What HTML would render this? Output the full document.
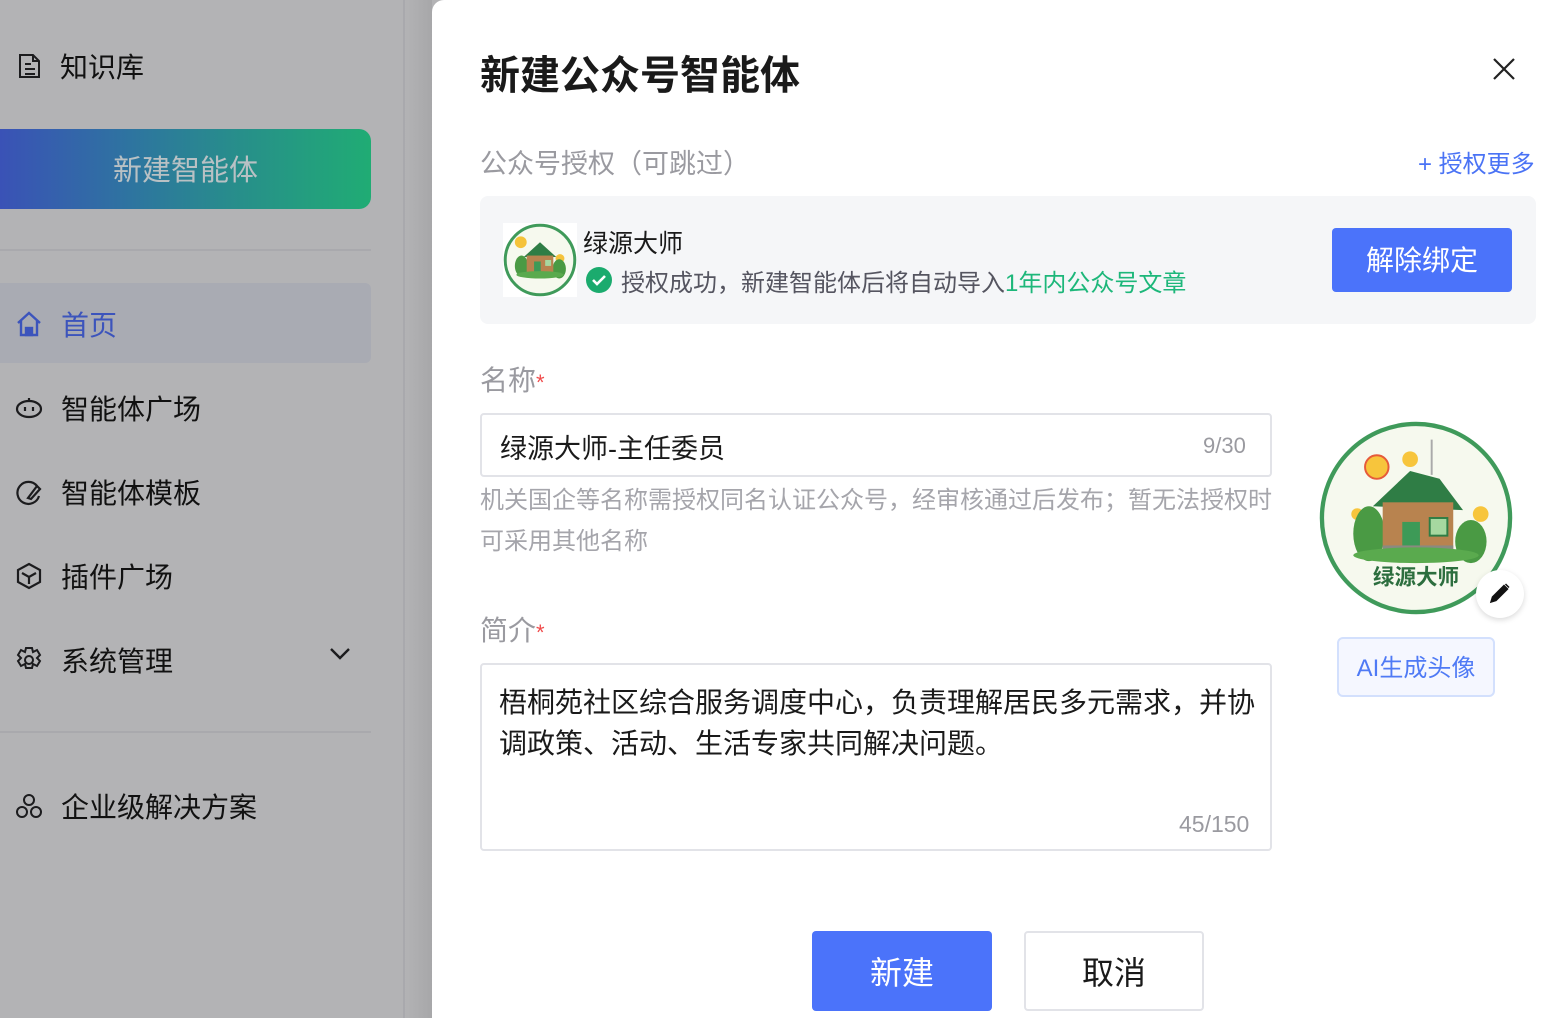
<!DOCTYPE html>
<html><head><meta charset="utf-8"><style>
*{margin:0;padding:0;box-sizing:border-box}
body{width:1542px;height:1018px;overflow:hidden;position:relative;background:#b3b3b5;font-family:"Liberation Sans","Noto Sans CJK SC",sans-serif}
.a{position:absolute;white-space:nowrap}
.nav{font-size:28px;color:#111;}
.ic{position:absolute;width:28px;height:28px}
</style></head><body>
<div class="a" style="left:403px;top:0;width:2px;height:1018px;background:#a9a9ad"></div>
<div class="a" style="left:405px;top:0;width:27px;height:1018px;background:linear-gradient(90deg,#b3b3b5,#a7a7a9)"></div>
<svg class="ic" style="left:16px;top:52px" viewBox="0 0 28 28" fill="none" stroke="#1c1c1e" stroke-width="2"><path d="M4 3h13l6 6v16H4z M17 3v6h6 M9 12h6 M9 17h10 M9 22h10"/></svg>
<div class="a nav" style="left:60px;top:46px">知识库</div>
<div class="a" style="left:0;top:129px;width:371px;height:80px;border-radius:0 12px 12px 0;background:linear-gradient(90deg,#3a52b6,#2e74a0 35%,#278f8a 65%,#20ac74);color:#b9c1c4;font-size:29px;text-align:center;line-height:84px">新建智能体</div>
<div class="a" style="left:0;top:249px;width:371px;height:2px;background:#a9a9ad"></div>
<div class="a" style="left:0;top:283px;width:371px;height:80px;border-radius:0 6px 6px 0;background:#a9abb3"></div>
<svg class="ic" style="left:15px;top:310px" viewBox="0 0 28 28" fill="none" stroke="#3c54bc" stroke-width="2.4"><path d="M3 13L14 3l11 10 M6 11v14h16V11"/><rect x="11" y="18" width="6" height="7" fill="#3c54bc"/></svg>
<div class="a nav" style="left:61px;top:304px;color:#3c54bc">首页</div>
<svg class="ic" style="left:15px;top:394px" viewBox="0 0 28 28" fill="none" stroke="#1c1c1e" stroke-width="2.2"><ellipse cx="14" cy="15" rx="12" ry="8"/><path d="M14 7V4"/><path d="M10 13v4M18 13v4"/></svg>
<div class="a nav" style="left:61px;top:388px">智能体广场</div>
<svg class="ic" style="left:15px;top:478px" viewBox="0 0 28 28" fill="none" stroke="#1c1c1e" stroke-width="2.2"><path d="M22 8A11 11 0 1 0 24 18"/><path d="M13 20l9-12 3 3-9 10z"/></svg>
<div class="a nav" style="left:61px;top:472px">智能体模板</div>
<svg class="ic" style="left:15px;top:562px" viewBox="0 0 28 28" fill="none" stroke="#1c1c1e" stroke-width="2.2"><path d="M14 2l11 6v12l-11 6-11-6V8z M7 11l7 4 7-4 M14 15v7"/></svg>
<div class="a nav" style="left:61px;top:556px">插件广场</div>
<svg class="ic" style="left:15px;top:646px" viewBox="0 0 28 28" fill="none" stroke="#1c1c1e" stroke-width="2"><path d="M11 2h6l1 4 4-2 3 5-3 3 3 3-3 5-4-2-1 4h-6l-1-4-4 2-3-5 3-3-3-3 3-5 4 2z"/><circle cx="14" cy="14" r="4"/></svg>
<div class="a nav" style="left:61px;top:640px">系统管理</div>
<svg class="a" style="left:328px;top:645px" width="24" height="16" viewBox="0 0 24 16" fill="none" stroke="#1c1c1e" stroke-width="2.4"><path d="M3 4l9 9 9-9"/></svg>
<div class="a" style="left:0;top:731px;width:371px;height:2px;background:#a9a9ad"></div>
<svg class="ic" style="left:15px;top:792px" viewBox="0 0 28 28" fill="none" stroke="#1c1c1e" stroke-width="2"><circle cx="14" cy="8" r="5"/><circle cx="7" cy="20" r="5"/><circle cx="21" cy="20" r="5"/></svg>
<div class="a nav" style="left:61px;top:786px">企业级解决方案</div>

<div class="a" style="left:432px;top:0;width:1110px;height:1018px;background:#fff;border-radius:12px 0 0 0"></div>
<div class="a" style="left:480px;top:43px;font-size:40px;font-weight:bold;color:#1a1a1a">新建公众号智能体</div>
<svg class="a" style="left:1490px;top:55px" width="28" height="28" viewBox="0 0 28 28" stroke="#222" stroke-width="2.2"><path d="M4 4l20 20M24 4L4 24"/></svg>
<div class="a" style="left:480px;top:142px;font-size:27px;color:#9a9aa0">公众号授权（可跳过）</div>
<div class="a" style="left:1418px;top:144px;font-size:24px;color:#4a73f5">+ 授权更多</div>
<div class="a" style="left:480px;top:196px;width:1056px;height:128px;background:#f5f6f8;border-radius:8px"></div>
<svg class="a" style="left:503px;top:223px" width="74" height="74" viewBox="0 0 100 100">
<rect width="100" height="100" fill="#fff"/><circle cx="50" cy="50" r="47" fill="#f6f9ee" stroke="#3f9a5a" stroke-width="4"/>
<circle cx="24" cy="26" r="8" fill="#f5c33a"/><circle cx="77" cy="48" r="6" fill="#f5c33a"/>
<ellipse cx="25" cy="58" rx="9" ry="14" fill="#4a9a44"/><ellipse cx="76" cy="62" rx="9" ry="13" fill="#4a9a44"/>
<path d="M28 46L50 26 72 46z" fill="#2f7d45"/><rect x="32" y="44" width="36" height="24" fill="#b8834f"/><rect x="42" y="52" width="9" height="16" fill="#3d9a57"/><rect x="57" y="50" width="8" height="8" fill="#a6d8a0"/>
<ellipse cx="50" cy="70" rx="32" ry="5" fill="#5aaa4e"/>
</svg>
<div class="a" style="left:583px;top:224px;font-size:25px;color:#1a1a1a">绿源大师</div>
<svg class="a" style="left:586px;top:267px" width="26" height="26" viewBox="0 0 26 26"><circle cx="13" cy="13" r="13" fill="#1bab6e"/><path d="M7 13l4 4 8-8" fill="none" stroke="#fff" stroke-width="2.6"/></svg>
<div class="a" style="left:621px;top:263px;font-size:24px;color:#555560">授权成功，新建智能体后将自动导入<span style="color:#1db77a">1年内公众号文章</span></div>
<div class="a" style="left:1332px;top:228px;width:180px;height:64px;background:#4b73fa;border-radius:4px;color:#fff;font-size:28px;text-align:center;line-height:66px">解除绑定</div>

<div class="a" style="left:480px;top:359px;font-size:28px;color:#9a9aa0">名称<span style="color:#f04b4b;font-size:22px">*</span></div>
<div class="a" style="left:480px;top:413px;width:792px;height:64px;border:2px solid #e2e3e8;border-radius:4px"></div>
<div class="a" style="left:500px;top:427px;font-size:27px;color:#1a1a1a">绿源大师-主任委员</div>
<div class="a" style="left:1203px;top:433px;font-size:22px;color:#9a9aa0">9/30</div>
<div class="a" style="left:480px;top:480px;font-size:24px;color:#a5a5ab;line-height:41px;white-space:normal;width:800px">机关国企等名称需授权同名认证公众号，经审核通过后发布；暂无法授权时可采用其他名称</div>

<div class="a" style="left:480px;top:609px;font-size:28px;color:#9a9aa0">简介<span style="color:#f04b4b;font-size:22px">*</span></div>
<div class="a" style="left:480px;top:663px;width:792px;height:188px;border:2px solid #e2e3e8;border-radius:4px"></div>
<div class="a" style="left:499px;top:682px;width:762px;font-size:28px;line-height:41px;color:#1a1a1a;white-space:normal">梧桐苑社区综合服务调度中心，负责理解居民多元需求，并协调政策、活动、生活专家共同解决问题。</div>
<div class="a" style="left:1179px;top:811px;font-size:23px;color:#9a9aa0">45/150</div>

<svg class="a" style="left:1318px;top:420px" width="196" height="196" viewBox="0 0 100 100">
<circle cx="50" cy="50" r="48" fill="#f6f9ee" stroke="#3f9a5a" stroke-width="2.2"/>
<circle cx="30" cy="24" r="6" fill="#f7c53c" stroke="#e65b3a" stroke-width="1"/><circle cx="47" cy="20" r="4" fill="#f7c53c"/><circle cx="83" cy="48" r="4" fill="#f7c53c"/><circle cx="20" cy="48" r="3" fill="#f7c53c"/>
<path d="M58 28V10" stroke="#aaa" stroke-width="1"/>
<ellipse cx="26" cy="58" rx="8" ry="14" fill="#4a9a44"/><ellipse cx="78" cy="62" rx="8" ry="11" fill="#4a9a44"/>
<path d="M28 44L47 26 62 30 74 46z" fill="#2f7d45"/><rect x="33" y="42" width="36" height="26" fill="#b8834f"/><rect x="43" y="52" width="9" height="16" fill="#3d9a57"/><rect x="57" y="50" width="9" height="9" fill="#a6d8a0" stroke="#2f7d45"/>
<rect x="33" y="64" width="36" height="5" fill="#8a8a80"/>
<ellipse cx="50" cy="69" rx="32" ry="4" fill="#5aaa4e"/>
<text x="50" y="84" text-anchor="middle" font-size="11" font-weight="bold" fill="#2c6e3e" font-family="Noto Sans CJK SC,sans-serif">绿源大师</text>
</svg>
<div class="a" style="left:1476px;top:570px;width:48px;height:48px;border-radius:50%;background:#fff;box-shadow:0 2px 6px rgba(0,0,0,.15)"></div>
<svg class="a" style="left:1488px;top:581px" width="24" height="24" viewBox="0 0 24 24"><path d="M3 21l1.5-5L16 4.5l3.5 3.5L8 19.5z M17.5 3l3.5 3.5" fill="#111" stroke="#111" stroke-width="1.5"/></svg>
<div class="a" style="left:1337px;top:637px;width:158px;height:60px;border:2px solid #d3e0fd;border-radius:6px;background:#f5f7ff;font-size:24px;text-align:center;line-height:60px;color:#4f7af5">AI生成头像</div>

<div class="a" style="left:812px;top:931px;width:180px;height:80px;background:#4b73fa;border-radius:4px;color:#fff;font-size:32px;text-align:center;line-height:84px">新建</div>
<div class="a" style="left:1024px;top:931px;width:180px;height:80px;border:2px solid #e2e3e8;border-radius:4px;color:#1a1a1a;font-size:32px;text-align:center;line-height:80px">取消</div>
</body></html>
